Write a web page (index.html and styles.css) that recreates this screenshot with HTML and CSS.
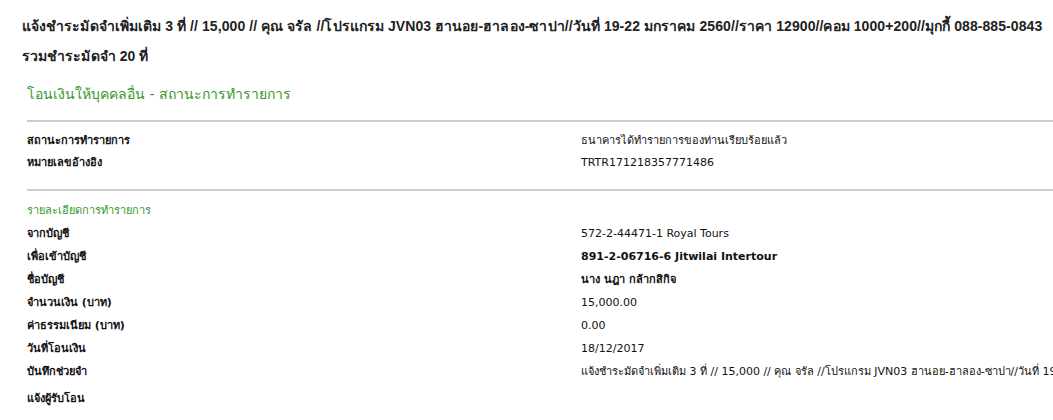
FILE: index.html
```html
<!DOCTYPE html>
<html lang="th">
<head>
<meta charset="utf-8">
<title>โอนเงินให้บุคคลอื่น</title>
<link rel="stylesheet" href="styles.css">
</head>
<body>
<div class="note">
  <p class="note-line">แจ้งชำระมัดจำเพิ่มเติม 3 ที่ // 15,000 // คุณ จรัล //โปรแกรม JVN03 ฮานอย-ฮาลอง-ซาปา//วันที่ 19-22 มกราคม 2560//ราคา 12900//คอม 1000+200//มุกกี้ 088-885-0843</p>
  <p class="note-line">รวมชำระมัดจำ 20 ที่</p>
</div>
<div class="panel">
  <h1 class="title">โอนเงินให้บุคคลอื่น - สถานะการทำรายการ</h1>
  <div class="rule"></div>
  <div class="rows rows-status">
    <div class="row"><span class="label">สถานะการทำรายการ</span><span class="value">ธนาคารได้ทำรายการของท่านเรียบร้อยแล้ว</span></div>
    <div class="row"><span class="label">หมายเลขอ้างอิง</span><span class="value">TRTR171218357771486</span></div>
  </div>
  <div class="rule"></div>
  <h2 class="subtitle">รายละเอียดการทำรายการ</h2>
  <div class="rows rows-detail">
    <div class="row"><span class="label">จากบัญชี</span><span class="value">572-2-44471-1 Royal Tours</span></div>
    <div class="row"><span class="label">เพื่อเข้าบัญชี</span><span class="value strong">891-2-06716-6 Jitwilai Intertour</span></div>
    <div class="row"><span class="label">ชื่อบัญชี</span><span class="value strong">นาง นฎา กล้ากสิกิจ</span></div>
    <div class="row"><span class="label">จำนวนเงิน (บาท)</span><span class="value">15,000.00</span></div>
    <div class="row"><span class="label">ค่าธรรมเนียม (บาท)</span><span class="value">0.00</span></div>
    <div class="row"><span class="label">วันที่โอนเงิน</span><span class="value">18/12/2017</span></div>
    <div class="row"><span class="label">บันทึกช่วยจำ</span><span class="value">แจ้งชำระมัดจำเพิ่มเติม 3 ที่ // 15,000 // คุณ จรัล //โปรแกรม JVN03 ฮานอย-ฮาลอง-ซาปา//วันที่ 19-22 มกราคม 2560//ราคา 12900//คอม 1000+200//มุกกี้ 088-885-0843</span></div>
    <div class="row row-last"><span class="label">แจ้งผู้รับโอน</span><span class="value"></span></div>
  </div>
</div>
</body>
</html>
```

FILE: styles.css
```css
html, body {
  margin: 0;
  padding: 0;
  background: #ffffff;
  overflow: hidden;
}
body {
  color: #111111;
  font-family: "DejaVu Sans", Tahoma, "Noto Sans", sans-serif;
  font-size: 11px;
}
.note {
  padding: 11px 0 0 22px;
}
.note-line {
  margin: 0;
  font-family: "Liberation Sans", Arial, sans-serif;
  font-weight: bold;
  font-size: 14px;
  letter-spacing: 0.08px;
  line-height: 30px;
  white-space: nowrap;
  color: #222222;
}
.panel {
  padding-left: 27px;
}
.title {
  margin: 8px 0 11px 0;
  font-size: 14px;
  font-weight: normal;
  line-height: 30px;
  color: #37962a;
}
.rule {
  height: 2px;
  background: #cccccc;
  width: 1100px;
}
.rows-status {
  padding: 8px 0 15px 0;
}
.rows-status .row {
  line-height: 22px;
}
.subtitle {
  margin: 9px 0 0 0;
  font-size: 11px;
  font-weight: normal;
  line-height: 22px;
  color: #37962a;
}
.rows-detail .row {
  line-height: 23px;
}
.row {
  display: flex;
  white-space: nowrap;
}
.label {
  flex: 0 0 554px;
  font-weight: bold;
}
.value {
  flex: 0 0 auto;
}
.strong {
  font-weight: bold;
}
.row-last {
  padding-top: 4px;
}
```
